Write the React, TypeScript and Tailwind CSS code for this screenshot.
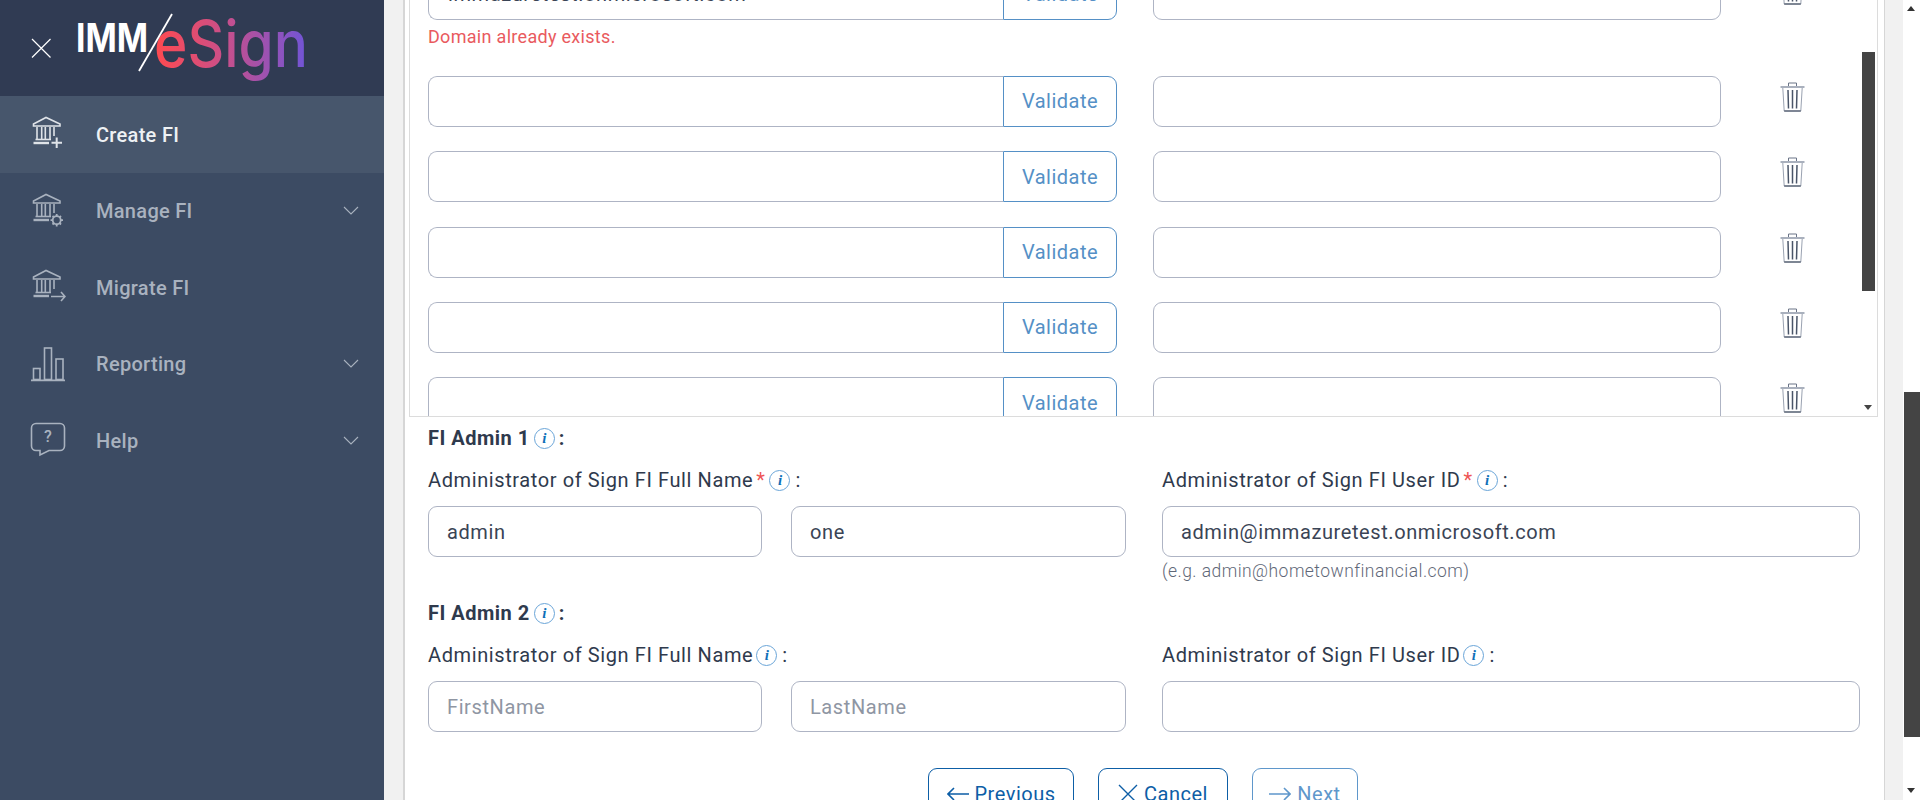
import React from 'react';

const font = { fontFamily: 'Roboto, sans-serif' };

const BankBase = () => (
  <>
    <path d="M3.5 10 V8 L16 1.5 L30 8 V10 Z" />
    <path d="M7 11 V23.5 M11.7 11 V23.5 M15.3 11 V23.5 M20 11 V23.5 M24 11 V20" />
    <path d="M5.5 23.5 H21" />
    <path d="M3.5 27 H19" strokeWidth="2.4" />
  </>
);

const IconCreate = () => (
  <svg width="36" height="36" viewBox="0 0 36 36" fill="none" stroke="#dfe3e8" strokeWidth="1.6">
    <BankBase />
    <path d="M26.7 21.5 V32 M21.5 26.7 H32" strokeWidth="2" />
  </svg>
);

const IconManage = () => (
  <svg width="36" height="36" viewBox="0 0 36 36" fill="none" stroke="#a9b2bf" strokeWidth="1.6">
    <BankBase />
    <circle cx="26.7" cy="27.2" r="4" strokeWidth="1.8" />
    <path d="M26.7 21 V23.5 M26.7 31 V33.5 M20.5 27.2 H23 M30.5 27.2 H33 M22.5 23 L24 24.5 M29.5 30 L31 31.5 M22.5 31.5 L24 30 M29.5 24.5 L31 23" strokeWidth="1.8" />
  </svg>
);

const IconMigrate = () => (
  <svg width="36" height="36" viewBox="0 0 36 36" fill="none" stroke="#a9b2bf" strokeWidth="1.6">
    <BankBase />
    <path d="M21 27.5 H35 M31 23 L35 27.5 L31 32" />
  </svg>
);

const IconReport = () => (
  <svg width="36" height="36" viewBox="0 0 36 36" fill="none" stroke="#a9b2bf" strokeWidth="1.6">
    <rect x="3.5" y="22.5" width="6.5" height="11" />
    <rect x="14.5" y="2" width="7" height="31.5" />
    <rect x="26" y="13" width="7" height="20.5" />
    <path d="M1 34.3 H35" strokeWidth="1.8" />
  </svg>
);

const IconHelp = () => (
  <svg width="36" height="36" viewBox="0 0 36 36" fill="none" stroke="#a9b2bf" strokeWidth="1.6">
    <path d="M6 1.5 H30 A4.5 4.5 0 0 1 34.5 6 V24 A4.5 4.5 0 0 1 30 28.5 H19 L10 33 V28.5 H6 A4.5 4.5 0 0 1 1.5 24 V6 A4.5 4.5 0 0 1 6 1.5 Z" />
    <text x="18" y="20" textAnchor="middle" fontSize="16" fontWeight="500" fill="#a9b2bf" stroke="none" fontFamily="Roboto, sans-serif">?</text>
  </svg>
);

const Chevron = () => (
  <svg width="16" height="9" viewBox="0 0 16 9" fill="none" stroke="#a9b2bf" strokeWidth="1.1">
    <path d="M1 1 L8 8 L15 1" />
  </svg>
);

const Logo = () => (
  <svg width="240" height="80" viewBox="0 0 240 80" className="ml-[25px]">
    <defs>
      <linearGradient id="esignGrad" x1="80" y1="0" x2="232" y2="0" gradientUnits="userSpaceOnUse">
        <stop offset="0" stopColor="#ff4a50" />
        <stop offset="0.45" stopColor="#c94f8a" />
        <stop offset="1" stopColor="#6f55d8" />
      </linearGradient>
    </defs>
    <text x="0" y="44" fontFamily="Inter, sans-serif" fontWeight="700" fontSize="40" fill="#ffffff" textLength="72" lengthAdjust="spacingAndGlyphs">IMM</text>
    <text x="78" y="59" fontFamily="Inter, sans-serif" fontWeight="500" fontSize="65" fill="url(#esignGrad)" textLength="154" lengthAdjust="spacingAndGlyphs">eSign</text>
    <path d="M96 6 L63 63" stroke="#ffffff" strokeWidth="1.8" />
  </svg>
);

const Trash = () => (
  <svg width="25" height="30" viewBox="0 0 25 30" fill="none">
    <path d="M8.5 4 V1 H16.5 V4" stroke="#6b7487" strokeWidth="1" />
    <path d="M0.5 5 H24.5" stroke="#a9b0bd" strokeWidth="2" />
    <path d="M2.8 6 L4.2 29 H20.8 L22.2 6" stroke="#9aa2b1" strokeWidth="1" />
    <path d="M4.2 29 H20.8" stroke="#4a5568" strokeWidth="1.2" />
    <path d="M8 8 L8.5 26.5 M12.5 8 V26.5 M17 8 L16.5 26.5" stroke="#4a5568" strokeWidth="1.5" />
  </svg>
);

const Info = () => (
  <span className="inline-flex h-[21px] w-[21px] shrink-0 items-center justify-center rounded-full border border-[#6aa5d8] bg-white text-[15px] font-bold italic leading-none tracking-normal text-[#0f6fb8] [font-family:'Liberation_Serif',serif]">
    i
  </span>
);

const Req = () => <span className="ml-[3px] mr-[4px] text-[#ee5555]">*</span>;

const navItems = [
  { label: 'Create FI', icon: <IconCreate />, active: true, caret: false },
  { label: 'Manage FI', icon: <IconManage />, active: false, caret: true },
  { label: 'Migrate FI', icon: <IconMigrate />, active: false, caret: false },
  { label: 'Reporting', icon: <IconReport />, active: false, caret: true },
  { label: 'Help', icon: <IconHelp />, active: false, caret: true },
];

const inputCls =
  'h-[51px] rounded-[9px] border border-[#aeb4c4] bg-white px-[18px] text-[20px] tracking-[0.6px] text-[#3a4455] outline-none placeholder:text-[#8f96a3]';

const DomainRow = ({ value }: { value?: string }) => (
  <div className="flex h-[51px] items-start">
    <div className="flex h-[51px] w-[689px] shrink-0">
      <input
        readOnly
        value={value ?? ''}
        className="h-[51px] min-w-0 flex-1 rounded-l-[9px] border border-r-0 border-[#aeb4c4] bg-white px-[19px] text-[20px] tracking-[0.6px] text-[#3a4455] outline-none"
      />
      <button className="h-[51px] w-[114px] rounded-r-[9px] border border-[#5590c6] bg-white text-[20px] tracking-[0.5px] text-[#5590c6]">
        Validate
      </button>
    </div>
    <input readOnly className={`${inputCls} ml-[36px] w-[568px]`} />
    <div className="ml-[59px] mt-[6px] flex w-[25px] justify-center">
      <Trash />
    </div>
  </div>
);

const Label = ({ children }: { children: React.ReactNode }) => (
  <div className="flex h-[24px] items-center text-[20px] tracking-[0.6px] text-[#2f3a4d]">{children}</div>
);

const Heading = ({ n }: { n: number }) => (
  <div className="flex h-[24px] items-center text-[20px] font-bold tracking-[0.5px] text-[#2f3a4d]">
    <span>FI Admin {n}</span>
    <span className="mx-[4px] flex"><Info /></span>
    <span>:</span>
  </div>
);

const AdminBlock = ({ n, required, first, last, email, hint }: { n: number; required?: boolean; first?: string; last?: string; email?: string; hint?: boolean }) => (
  <div>
    <Heading n={n} />
    <div className="mt-[18px] flex">
      <div className="w-[734px]">
        <Label>
          <span>Administrator of Sign FI Full Name</span>
          {required ? <Req /> : <span className="w-[3px]" />}
          <Info />
          <span className="ml-[5px]">:</span>
        </Label>
        <div className="mt-[14px] flex gap-[29px]">
          <input readOnly value={first ?? ''} placeholder="FirstName" className={`${inputCls} w-[334px]`} />
          <input readOnly value={last ?? ''} placeholder="LastName" className={`${inputCls} w-[335px]`} />
        </div>
      </div>
      <div className="w-[698px]">
        <Label>
          <span>Administrator of Sign FI User ID</span>
          {required ? <Req /> : <span className="w-[3px]" />}
          <Info />
          <span className="ml-[5px]">:</span>
        </Label>
        <input readOnly value={email ?? ''} className={`${inputCls} mt-[14px] w-[698px]`} />
        {hint && (
          <div className="mt-[2px] text-[17.5px] font-light leading-[24px] tracking-[0.45px] text-[#5f6878]">(e.g. admin@hometownfinancial.com)</div>
        )}
      </div>
    </div>
  </div>
);

const ArrowIcon = ({ dir, color }: { dir: 'l' | 'r'; color: string }) => (
  <svg width="22" height="14" viewBox="0 0 22 14" fill="none" stroke={color} strokeWidth="1.6">
    {dir === 'l' ? <path d="M22 7 H1 M7 1 L1 7 L7 13" /> : <path d="M0 7 H21 M15 1 L21 7 L15 13" />}
  </svg>
);

const App: React.FC = () => {
  return (
    <div className="flex h-[800px] w-[1920px] overflow-hidden bg-[#f1f1f1]" style={font}>
      <aside className="h-full w-[384px] shrink-0 bg-[#3c4b63]">
        <div className="flex h-[96px] items-center bg-[#303b53] pl-[31px]">
          <svg width="20" height="20" viewBox="0 0 20 20" stroke="#ffffff" strokeWidth="1.2" className="shrink-0">
            <path d="M1 1 L19.5 19.5 M19.5 1 L1 19.5" />
          </svg>
          <Logo />
        </div>
        {navItems.map((item) => (
          <div key={item.label} className={`flex h-[76.5px] items-center pl-[30px] pr-[25px] ${item.active ? 'bg-[#47566c]' : ''}`}>
            <span className="flex w-[66px] shrink-0">{item.icon}</span>
            <span className={`flex-1 pt-[1px] text-[20px] font-medium tracking-[0.3px] ${item.active ? 'text-[#eef1f4]' : 'text-[#a9b2bf]'}`}>{item.label}</span>
            {item.caret && <Chevron />}
          </div>
        ))}
      </aside>

      <main className="h-full flex-1 pl-[19px] pr-[18px]">
        <div className="h-full border-l-2 border-r border-[#d6d6d6] bg-white pl-[4px] pr-[6px]">
          <div className="relative h-[417px] overflow-hidden border-x border-b border-[#dcdcdc] pl-[18px]">
            <div className="-mt-[31.5px] flex flex-col gap-[24.3px]">
              <div>
                <DomainRow value="immazuretest.onmicrosoft.com" />
                <div className="mt-[4px] h-[28.2px] text-[18px] leading-[26px] tracking-[0.3px] text-[#e95a5e]">Domain already exists.</div>
              </div>
              <DomainRow />
              <DomainRow />
              <DomainRow />
              <DomainRow />
              <DomainRow />
            </div>
            {/* inner scrollbar */}
            <div className="absolute right-[2px] top-[52px] h-[239px] w-[13px] bg-[#444444]" />
            <div className="absolute right-[5px] top-[405px] h-0 w-0 border-x-[4px] border-t-[5px] border-x-transparent border-t-[#444444]" />
          </div>
          <div className="pl-[19px] pt-[9px]">
            <AdminBlock n={1} required first="admin" last="one" email="admin@immazuretest.onmicrosoft.com" hint />
            <div className="mt-[18px]">
              <AdminBlock n={2} />
            </div>
            <div className="mt-[36px] flex h-[51px] justify-center gap-[24px] pr-[20px] text-[20px] tracking-[0.5px]">
              <button className="flex h-[51px] w-[146px] items-center justify-center gap-[6px] rounded-[9px] border border-[#0d5ea6] text-[#0d5ea6]">
                <ArrowIcon dir="l" color="#0d5ea6" />Previous
              </button>
              <button className="flex h-[51px] w-[130px] items-center justify-center gap-[6px] rounded-[9px] border border-[#0d5ea6] text-[#0d5ea6]">
                <svg width="20" height="20" viewBox="0 0 20 20" stroke="#0d5ea6" strokeWidth="1.4"><path d="M1 1 L19 19 M19 1 L1 19" /></svg>Cancel
              </button>
              <button className="flex h-[51px] w-[106px] items-center justify-center gap-[6px] rounded-[9px] border border-[#5f97cb] text-[#5f97cb]">
                <ArrowIcon dir="r" color="#5f97cb" />Next
              </button>
            </div>
          </div>
        </div>
      </main>

      <div className="relative h-full w-[17px] shrink-0 bg-white">
        <div className="absolute left-[4px] top-[6px] h-0 w-0 border-x-[4px] border-b-[5px] border-x-transparent border-b-[#333333]" />
        <div className="absolute left-[1px] right-0 top-[392px] h-[345px] bg-[#444444]" />
        <div className="absolute left-[4px] top-[788px] h-0 w-0 border-x-[4px] border-t-[5px] border-x-transparent border-t-[#333333]" />
      </div>
    </div>
  );
};

export default App;
